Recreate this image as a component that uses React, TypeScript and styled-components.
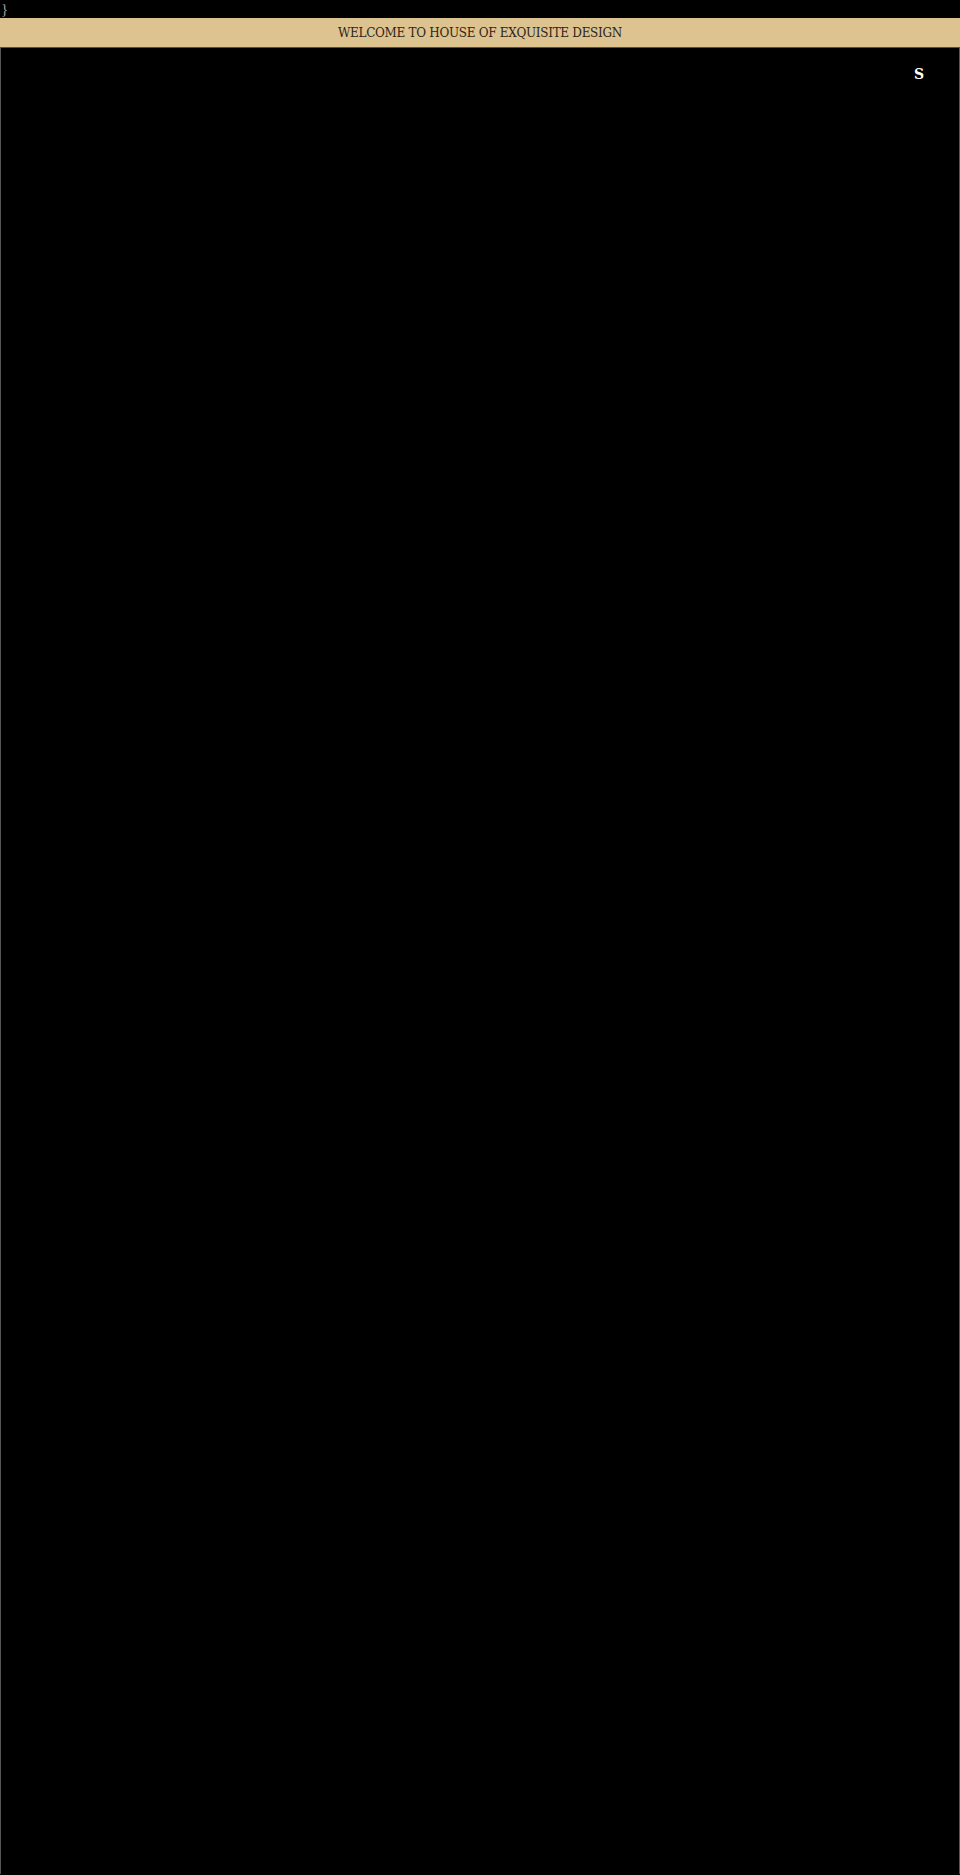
import styled, { createGlobalStyle } from "styled-components";

const GlobalStyle = createGlobalStyle`
  html, body {
    margin: 0;
    padding: 0;
    background: #000;
  }
  body {
    font-family: "Liberation Serif", serif;
  }
`;

const App = () => {
  return (
    <>
      <GlobalStyle />
      <Stray>{"}"}</Stray>
      <Banner>
        <BannerText>WELCOME TO HOUSE OF EXQUISITE DESIGN</BannerText>
      </Banner>
      <Frame>
        <TopRow>
          <Mark>S</Mark>
        </TopRow>
      </Frame>
    </>
  );
};

const Stray = styled.div`
  height: 18px;
  padding-left: 1px;
  color: #a0a0a0;
  font-family: "Liberation Serif", serif;
  font-size: 15px;
  line-height: 18px;
`;

const Banner = styled.div`
  height: 29px;
  display: flex;
  align-items: center;
  justify-content: center;
  background: #dcc390;
  border-bottom: 1px solid #5a5040;
`;

const BannerText = styled.span`
  color: #2f2519;
  font-family: "DejaVu Serif", serif;
  font-size: 12px;
  letter-spacing: -0.3px;
`;

const Frame = styled.div`
  height: 1826px;
  border-left: 1px solid #555;
  border-right: 1px solid #555;
  background: #000;
`;

const TopRow = styled.div`
  display: flex;
  justify-content: flex-end;
  padding: 16px 35px 0 0;
`;

const Mark = styled.span`
  color: #fff;
  font-family: "DejaVu Serif", serif;
  font-weight: bold;
  font-size: 14px;
  line-height: 20px;
`;

export default App;
